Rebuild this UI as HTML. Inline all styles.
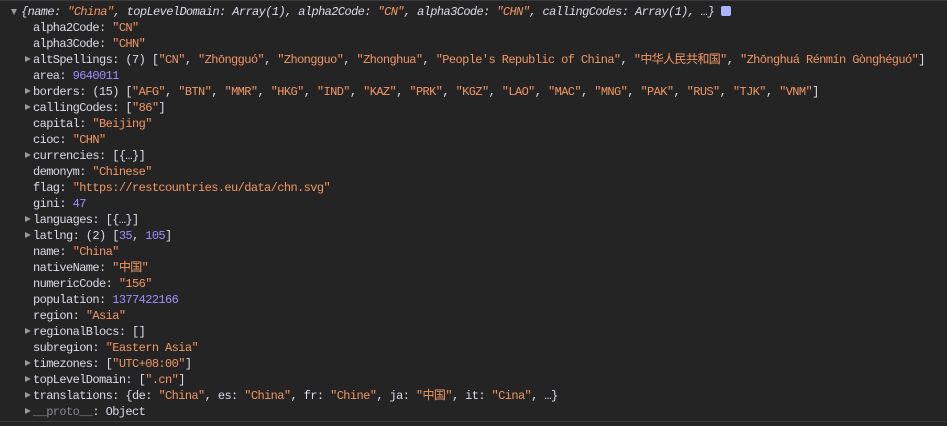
<!DOCTYPE html><html><head><meta charset="utf-8"><style>
body{margin:0;background:#242424;width:947px;height:426px;overflow:hidden;font-family:"Liberation Mono","Noto Sans CJK SC",monospace;font-size:12px;letter-spacing:-0.6px;color:#dcdcec}
.r{position:absolute;height:16px;line-height:16px;white-space:pre}
.s{color:#f29766}.n{color:#9e8fff}.p{color:#8a8a9a}
i{font-style:italic}
.a{position:absolute;width:0;height:0;border-left:6px solid #9a9a9a;border-top:3.5px solid transparent;border-bottom:3.5px solid transparent}
.d{position:absolute;width:0;height:0;border-top:6px solid #9a9a9a;border-left:3.5px solid transparent;border-right:3.5px solid transparent}
.line{position:absolute;left:0;right:0;top:421px;height:1px;background:#3a3a3a}
.top{position:absolute;left:0;right:0;top:0;height:1px;background:#3a3a3a}
</style></head><body>
<div class="top"></div>
<div class="d" style="left:11px;top:9px"></div>
<div class="r" style="left:21px;top:4px"><i>{name: <span class="s">"China"</span>, topLevelDomain: Array(1), alpha2Code: <span class="s">"CN"</span>, alpha3Code: <span class="s">"CHN"</span>, callingCodes: Array(1), …}</i> <span style="display:inline-block;width:10px;height:10px;background:#a9b6ff;border-radius:2px;vertical-align:-1px"></span></div>
<div class="r" style="left:33px;top:20px">alpha2Code: <span class="s">"CN"</span></div>
<div class="r" style="left:33px;top:36px">alpha3Code: <span class="s">"CHN"</span></div>
<div class="a" style="left:25px;top:56px"></div><div class="r" style="left:33px;top:52px">altSpellings: (7) [<span class="s">"CN"</span>, <span class="s">"Zhōngguó"</span>, <span class="s">"Zhongguo"</span>, <span class="s">"Zhonghua"</span>, <span class="s">"People's Republic of China"</span>, <span class="s">"中华人民共和国"</span>, <span class="s">"Zhōnghuá Rénmín Gònghéguó"</span>]</div>
<div class="r" style="left:33px;top:68px">area: <span class="n">9640011</span></div>
<div class="a" style="left:25px;top:88px"></div><div class="r" style="left:33px;top:84px">borders: (15) [<span class="s">"AFG"</span>, <span class="s">"BTN"</span>, <span class="s">"MMR"</span>, <span class="s">"HKG"</span>, <span class="s">"IND"</span>, <span class="s">"KAZ"</span>, <span class="s">"PRK"</span>, <span class="s">"KGZ"</span>, <span class="s">"LAO"</span>, <span class="s">"MAC"</span>, <span class="s">"MNG"</span>, <span class="s">"PAK"</span>, <span class="s">"RUS"</span>, <span class="s">"TJK"</span>, <span class="s">"VNM"</span>]</div>
<div class="a" style="left:25px;top:104px"></div><div class="r" style="left:33px;top:100px">callingCodes: [<span class="s">"86"</span>]</div>
<div class="r" style="left:33px;top:116px">capital: <span class="s">"Beijing"</span></div>
<div class="r" style="left:33px;top:132px">cioc: <span class="s">"CHN"</span></div>
<div class="a" style="left:25px;top:152px"></div><div class="r" style="left:33px;top:148px">currencies: [{…}]</div>
<div class="r" style="left:33px;top:164px">demonym: <span class="s">"Chinese"</span></div>
<div class="r" style="left:33px;top:180px">flag: <span class="s">"https://restcountries.eu/data/chn.svg"</span></div>
<div class="r" style="left:33px;top:196px">gini: <span class="n">47</span></div>
<div class="a" style="left:25px;top:216px"></div><div class="r" style="left:33px;top:212px">languages: [{…}]</div>
<div class="a" style="left:25px;top:232px"></div><div class="r" style="left:33px;top:228px">latlng: (2) [<span class="n">35</span>, <span class="n">105</span>]</div>
<div class="r" style="left:33px;top:244px">name: <span class="s">"China"</span></div>
<div class="r" style="left:33px;top:260px">nativeName: <span class="s">"中国"</span></div>
<div class="r" style="left:33px;top:276px">numericCode: <span class="s">"156"</span></div>
<div class="r" style="left:33px;top:292px">population: <span class="n">1377422166</span></div>
<div class="r" style="left:33px;top:308px">region: <span class="s">"Asia"</span></div>
<div class="a" style="left:25px;top:328px"></div><div class="r" style="left:33px;top:324px">regionalBlocs: []</div>
<div class="r" style="left:33px;top:340px">subregion: <span class="s">"Eastern Asia"</span></div>
<div class="a" style="left:25px;top:360px"></div><div class="r" style="left:33px;top:356px">timezones: [<span class="s">"UTC+08:00"</span>]</div>
<div class="a" style="left:25px;top:376px"></div><div class="r" style="left:33px;top:372px">topLevelDomain: [<span class="s">".cn"</span>]</div>
<div class="a" style="left:25px;top:392px"></div><div class="r" style="left:33px;top:388px">translations: {de: <span class="s">"China"</span>, es: <span class="s">"China"</span>, fr: <span class="s">"Chine"</span>, ja: <span class="s">"中国"</span>, it: <span class="s">"Cina"</span>, …}</div>
<div class="a" style="left:25px;top:408px"></div><div class="r" style="left:33px;top:404px"><span class="p">__proto__</span>: Object</div>
<div class="line"></div>
</body></html>
